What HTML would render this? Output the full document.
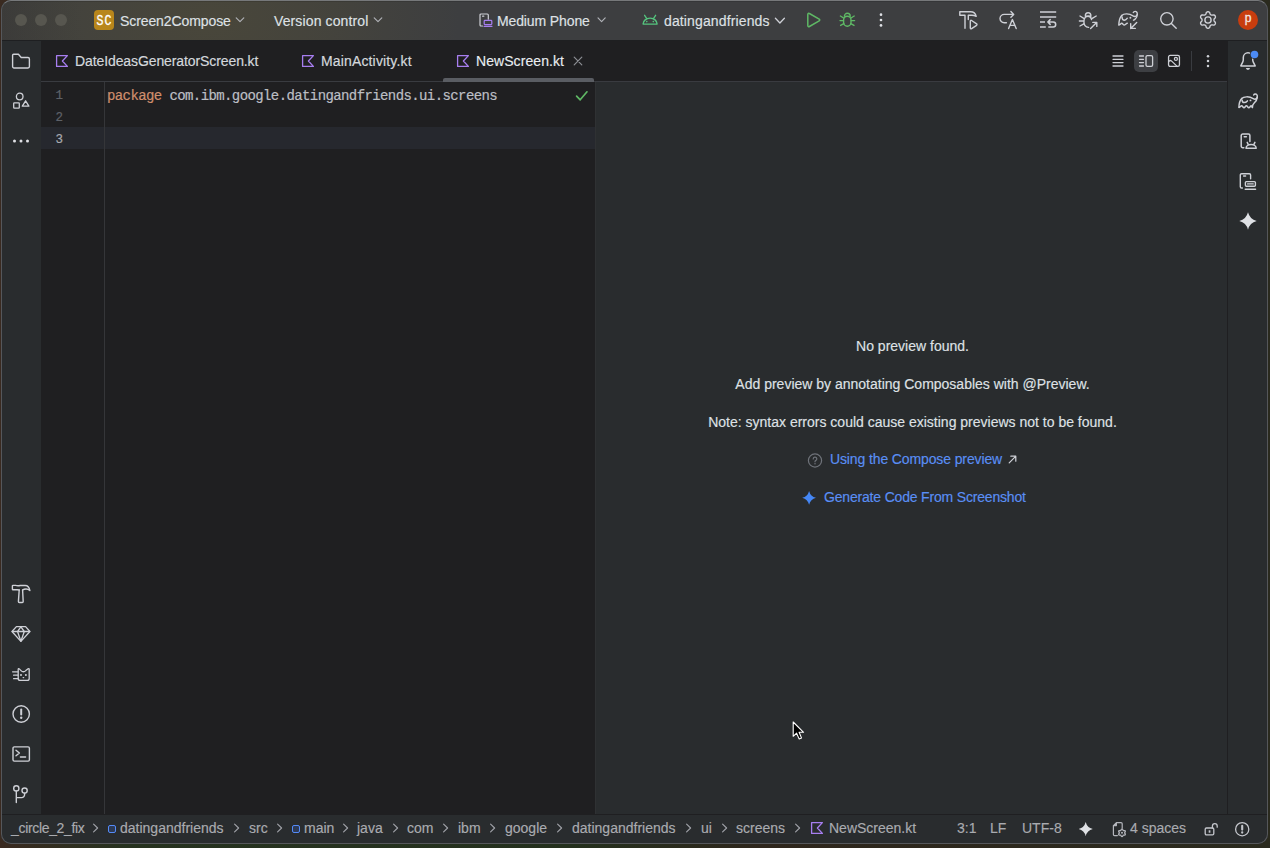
<!DOCTYPE html>
<html><head><meta charset="utf-8">
<style>
*{margin:0;padding:0;box-sizing:border-box}
html,body{width:1270px;height:848px;overflow:hidden;background:#1c2619;font-family:"Liberation Sans",sans-serif;position:relative}
#bg{position:absolute;left:0;top:0;width:1270px;height:848px;background:linear-gradient(180deg,rgba(0,0,0,0) 0,rgba(0,0,0,0) 840px,rgba(0,0,0,0) 100%),linear-gradient(90deg,#3a2a20 0,#26321f 10%,#24301d 45%,#2e261c 60%,#2a2a1e 100%)}
#win{position:absolute;left:0;top:0;width:1270px;height:848px;clip-path:inset(0px 2px 4px 1px round 10px);background:#292c2e}
#frame{position:absolute;left:1px;top:0px;width:1267px;height:844px;border-radius:10px;border:1px solid #55575b;border-top-color:#76787a;pointer-events:none}
.p{position:absolute}
#toolbar{position:absolute;left:0;top:0;width:1270px;height:41px;background:radial-gradient(ellipse 250px 150px at 210px 20px,rgba(100,90,45,0.3) 0,rgba(100,90,45,0.18) 50%,rgba(100,90,45,0) 100%),linear-gradient(90deg,#39393a 0,#3d3e40 80px,#3d3e40 100%);border-bottom:1px solid #1e1f21}
.t{position:absolute;white-space:nowrap;color:#dfe1e5;font-size:14px;line-height:16px;top:12.6px;-webkit-text-stroke:0.15px #dfe1e5}
svg{position:absolute;overflow:visible}
.ic{fill:none;stroke:#ced0d6;stroke-width:1.4;stroke-linecap:round;stroke-linejoin:round}
#lstripe{position:absolute;left:0;top:41px;width:41px;height:773px;background:#292c2e}
#rstripe{position:absolute;left:1227px;top:41px;width:43px;height:773px;background:#292c2e;border-left:1px solid #1f1f21}
#tabs{position:absolute;left:41px;top:41px;width:1186px;height:41px;background:#1f1f21;border-bottom:1px solid #393b40}
#editor{position:absolute;left:41px;top:82px;width:554px;height:732px;background:#1f1f21}
#preview{position:absolute;left:595px;top:82px;width:632px;height:732px;background:#292c2e;border-left:1px solid #2f3133}
#status{position:absolute;left:0;top:814px;width:1270px;height:34px;background:#292c2e;border-top:1px solid #1f1f21}
.mono{font-family:"Liberation Mono",monospace;font-size:14px;letter-spacing:-0.6px;line-height:16px;position:absolute;white-space:nowrap;-webkit-text-stroke:0.2px currentColor}
.st{position:absolute;white-space:nowrap;color:#a9abb0;font-size:14px;line-height:16px;top:820px;-webkit-text-stroke:0.15px #a9abb0}
.chev{fill:none;stroke:#a0a2a8;stroke-width:1.15;stroke-linecap:round;stroke-linejoin:round}
.pt{position:absolute;white-space:nowrap;color:#dfe1e5;font-size:14px;line-height:16px;text-align:center;left:596px;width:633px;-webkit-text-stroke:0.15px #dfe1e5}
</style></head><body>
<div id="bg"></div>
<div id="win">
  <div id="toolbar"></div>
  <div class="p" style="left:0;top:1px;width:1270px;height:1px;background:rgba(0,0,0,0.12)"></div>
  <div id="lstripe"></div>
  <div id="rstripe"></div>
  <div id="tabs"></div>
  <div id="editor"></div>
  <div id="preview"></div>
  <div id="status"></div>

  <div class="p" style="left:15px;top:14px;width:12px;height:12px;border-radius:6px;background:#57564f"></div>
  <div class="p" style="left:35px;top:14px;width:12px;height:12px;border-radius:6px;background:#57564f"></div>
  <div class="p" style="left:55px;top:14px;width:12px;height:12px;border-radius:6px;background:#57564f"></div>

  <div class="p" style="left:94px;top:10px;width:20px;height:20px;border-radius:4px;background:#b8861b"></div>
  <div class="p" style="left:89px;top:11px;width:30px;height:20px;color:#fff;font-size:14.5px;line-height:20px;text-align:center;font-family:'Liberation Mono',monospace;letter-spacing:1.2px;text-indent:1.2px;transform:scaleX(0.8);-webkit-text-stroke:0.3px #fff">SC</div>
  <div class="t" style="left:120px;letter-spacing:-0.09px">Screen2Compose</div>
  <svg style="left:235px;top:16px" width="10" height="8" viewBox="0 0 10 8"><path class="chev" style="stroke:#b0b2b7" d="M1.2 1.8 L5 5.6 L8.8 1.8"/></svg>
  <div class="t" style="left:274px;letter-spacing:0.12px">Version control</div>
  <svg style="left:373px;top:16px" width="10" height="8" viewBox="0 0 10 8"><path class="chev" style="stroke:#b0b2b7" d="M1.2 1.8 L5 5.6 L8.8 1.8"/></svg>

  <svg style="left:478px;top:12px" width="16" height="16" viewBox="0 0 16 16">
    <path class="ic" style="stroke-width:1.2" d="M4.5 14 H3 A1 1 0 0 1 2 13 V3 A1 1 0 0 1 3 2 H9.3 A1 1 0 0 1 10.3 3 V7.2"/>
    <path class="ic" style="stroke-width:1.2" d="M4.6 4.2 H5.8"/>
    <rect x="6.2" y="8.4" width="7.6" height="4.2" rx="0.8" fill="none" stroke="#a77ef0" stroke-width="1.2"/>
    <path d="M6 14.3 H14" stroke="#a77ef0" stroke-width="1.2" stroke-linecap="round"/>
  </svg>
  <div class="t" style="left:497px;letter-spacing:-0.12px">Medium Phone</div>
  <svg style="left:597px;top:16px" width="10" height="8" viewBox="0 0 10 8"><path class="chev" style="stroke:#b0b2b7" d="M1 1.8 L4.6 5.6 L8.2 1.8"/></svg>

  <svg style="left:640px;top:10px" width="20" height="20" viewBox="0 0 20 20">
    <path d="M3.1 14.1 A7 6 0 0 1 17.1 14.1 Z" fill="none" stroke="#55c47e" stroke-width="1.4" stroke-linejoin="round"/>
    <path d="M4.6 5.3 L6.6 8.3 M15.6 5.3 L13.6 8.3" stroke="#55c47e" stroke-width="1.3" stroke-linecap="round"/>
    <circle cx="6.8" cy="11.6" r="0.8" fill="#55c47e"/><circle cx="13.3" cy="11.6" r="0.8" fill="#55c47e"/>
  </svg>
  <div class="t" style="left:664px;letter-spacing:0.13px">datingandfriends</div>
  <svg style="left:774px;top:16px" width="12" height="9" viewBox="0 0 12 9"><path class="chev" style="stroke:#ced0d6;stroke-width:1.3" d="M1.4 2.2 L5.9 7 L10.4 2.2"/></svg>

  <svg style="left:803px;top:10px" width="20" height="20" viewBox="0 0 20 20">
    <path d="M4.8 4.4 C4.8 3.4 5.6 3 6.4 3.5 L16.2 9.2 C16.9 9.6 16.9 10.4 16.2 10.8 L6.4 16.5 C5.6 17 4.8 16.6 4.8 15.6 Z" fill="none" stroke="#5fb865" stroke-width="1.5" stroke-linejoin="round"/>
  </svg>
  <svg style="left:837px;top:10px" width="20" height="20" viewBox="0 0 20 20">
    <g fill="none" stroke="#5fb865" stroke-width="1.4" stroke-linecap="round" stroke-linejoin="round">
    <path d="M7.4 6.2 A2.9 2.9 0 0 1 13.2 6.2"/>
    <rect x="6.6" y="6.2" width="7.4" height="10" rx="3.7"/>
    <path d="M3 10.6 H6.4 M14.2 10.6 H17.6 M3.4 6 L6.6 8 M17.2 6 L14 8 M3.6 15.4 L6.8 13.6 M17 15.4 L13.8 13.6"/>
    </g>
  </svg>
  <svg style="left:871px;top:10px" width="20" height="20" viewBox="0 0 20 20"><g fill="#dfe1e5"><circle cx="10" cy="4.7" r="1.35"/><circle cx="10" cy="10" r="1.35"/><circle cx="10" cy="15.4" r="1.35"/></g></svg>

  <!-- right toolbar icons -->
  <svg style="left:958px;top:10px" width="20" height="20" viewBox="0 0 20 20"><g class="ic">
    <path d="M7 18.3 V5.3 H1.8 V1.7 H12.6 C15.4 1.7 17.6 3.6 18.2 6.3 C16.8 5.6 15.4 5.3 13.8 5.3 H10.3 V9.6"/>
    <path d="M12.3 11.2 C12.3 10.4 13 10.1 13.6 10.5 L18.6 13.9 C19.1 14.3 19.1 14.9 18.6 15.3 L13.6 18.7 C13 19.1 12.3 18.8 12.3 18 Z"/>
  </g></svg>
  <svg style="left:998px;top:10px" width="20" height="20" viewBox="0 0 20 20"><g class="ic">
    <path d="M8.4 12.8 H6.2 A4.2 4.2 0 0 1 6.2 4.4 H15.6 M12.9 1.6 L15.7 4.4 L12.9 7.2"/>
    <path d="M10.6 18.5 L14.4 9.6 L18.2 18.5 M11.9 15.4 H16.9"/>
  </g></svg>
  <svg style="left:1038px;top:10px" width="20" height="20" viewBox="0 0 20 20"><g class="ic" style="stroke-width:1.6;stroke-linecap:butt">
    <path d="M2 2 H18.2 M2 7 H18.2 M2 12 H7 M2 17 H7.8"/>
  </g><g class="ic" style="stroke-width:1.5">
    <path d="M10.8 17 H15.2 A2.5 2.5 0 0 0 15.2 12 H9.8 M12.2 9.6 L9.8 12 L12.2 14.4"/>
  </g></svg>
  <svg style="left:1078px;top:10px" width="20" height="20" viewBox="0 0 20 20"><g class="ic">
    <path d="M7.3 6.2 A2.8 3.4 0 0 1 12.9 6.2 Z"/>
    <path d="M13.6 9.6 C13.2 7.4 12 6.2 10.1 6.2 C7.6 6.2 5.9 8.3 5.9 11.6 C5.9 15.2 7.7 17.4 10.6 17.4"/>
    <path d="M1.4 11 H5.6 M2 6 L5.8 8.3 M2 16 L5.8 13.8 M18.2 6 L14.3 8.3"/>
    <path d="M12.6 18.6 L18.6 12.6 M14.8 12.4 H18.8 V16.4"/>
  </g></svg>
  <svg style="left:1118px;top:10px" width="20" height="20" viewBox="0 0 20 20"><g class="ic" style="stroke-width:1.4">
    <path d="M3.7 5.4 C5.5 3.6 11 3 15 5.9 C16.6 7 18.6 6.6 19.2 4.5 C19.6 2.6 18.4 1.4 17.2 1.4 C16.2 1.4 15.5 2 15.3 2.5"/>
    <path d="M19.2 4.5 C19.2 6.5 18.6 7.8 17.5 8.8 C16.8 9.5 16 9.9 15.5 10.2"/>
    <path d="M3.7 5.4 C2 7.2 1 10 0.8 15 C1.6 15.4 2.8 13.3 3.7 13.3 C4.8 13.3 5.2 15 6.2 15 C7.2 15 8.2 13.3 9.3 13.3"/>
    <path d="M3.9 6.6 C4 8.4 5 10.2 6.5 10.2 C7.6 10.2 8.6 9.2 9.3 8.2"/>
    <path d="M18.7 12.4 L12.7 18.4 M12.7 13.8 V18.4 H17.3"/>
  </g><circle cx="12.4" cy="7.8" r="0.95" fill="#ced0d6"/></svg>
  <svg style="left:1158px;top:10px" width="20" height="20" viewBox="0 0 20 20"><g class="ic" style="stroke-width:1.4">
    <circle cx="8.9" cy="8.8" r="6.2"/><path d="M13.4 13.4 L18.2 18.2"/>
  </g></svg>
  <svg style="left:1198px;top:10px" width="20" height="20" viewBox="0 0 20 20"><g class="ic" style="stroke-width:1.4">
    <path d="M15.95 10.00 L15.97 10.26 L16.02 10.53 L16.11 10.80 L16.24 11.10 L16.43 11.43 L16.86 11.84 L17.26 12.29 L17.38 12.69 L17.42 13.07 L17.39 13.45 L17.30 13.80 L17.14 14.12 L16.94 14.42 L16.68 14.68 L16.37 14.89 L16.02 15.05 L15.61 15.14 L15.02 15.02 L14.45 14.86 L14.08 14.86 L13.75 14.89 L13.47 14.95 L13.21 15.04 L12.97 15.15 L12.76 15.30 L12.55 15.48 L12.36 15.70 L12.17 15.96 L11.98 16.28 L11.84 16.86 L11.65 17.43 L11.36 17.74 L11.05 17.97 L10.71 18.12 L10.36 18.22 L10.00 18.25 L9.64 18.22 L9.29 18.12 L8.95 17.97 L8.64 17.74 L8.35 17.43 L8.16 16.86 L8.02 16.28 L7.83 15.96 L7.64 15.70 L7.45 15.48 L7.24 15.30 L7.03 15.15 L6.79 15.04 L6.53 14.95 L6.25 14.89 L5.92 14.86 L5.55 14.86 L4.98 15.02 L4.39 15.14 L3.98 15.05 L3.63 14.89 L3.32 14.68 L3.06 14.42 L2.86 14.13 L2.70 13.80 L2.61 13.45 L2.58 13.07 L2.62 12.69 L2.74 12.29 L3.14 11.84 L3.57 11.43 L3.76 11.10 L3.89 10.80 L3.98 10.53 L4.03 10.26 L4.05 10.00 L4.03 9.74 L3.98 9.47 L3.89 9.20 L3.76 8.90 L3.57 8.57 L3.14 8.16 L2.74 7.71 L2.62 7.31 L2.58 6.93 L2.61 6.55 L2.70 6.20 L2.86 5.87 L3.06 5.58 L3.32 5.32 L3.63 5.11 L3.98 4.95 L4.39 4.86 L4.98 4.98 L5.55 5.14 L5.92 5.14 L6.25 5.11 L6.53 5.05 L6.79 4.96 L7.02 4.85 L7.24 4.70 L7.45 4.52 L7.64 4.30 L7.83 4.04 L8.02 3.72 L8.16 3.14 L8.35 2.57 L8.64 2.26 L8.95 2.03 L9.29 1.88 L9.64 1.78 L10.00 1.75 L10.36 1.78 L10.71 1.88 L11.05 2.03 L11.36 2.26 L11.65 2.57 L11.84 3.14 L11.98 3.72 L12.17 4.04 L12.36 4.30 L12.55 4.52 L12.76 4.70 L12.97 4.85 L13.21 4.96 L13.47 5.05 L13.75 5.11 L14.08 5.14 L14.45 5.14 L15.02 4.98 L15.61 4.86 L16.02 4.95 L16.37 5.11 L16.68 5.32 L16.94 5.58 L17.14 5.88 L17.30 6.20 L17.39 6.55 L17.42 6.93 L17.38 7.31 L17.26 7.71 L16.86 8.16 L16.43 8.57 L16.24 8.90 L16.11 9.20 L16.02 9.47 L15.97 9.74Z"/><circle cx="10" cy="10" r="3.1"/>
  </g></svg>
  <div class="p" style="left:1238px;top:10px;width:20px;height:20px;border-radius:10px;background:#c83d0e"></div>
  <div class="p" style="left:1238px;top:10px;width:20px;height:20px;color:#f4e6e0;font-family:'Liberation Sans',sans-serif;font-size:12px;line-height:17px;text-align:center;-webkit-text-stroke:0.3px #f4e6e0">p</div>

  <!-- left stripe icons -->
  <svg style="left:11px;top:51px" width="20" height="20" viewBox="0 0 20 20"><g class="ic" style="stroke-width:1.4">
    <path d="M2.6 3.3 H7.4 L10.2 6.5 H17 A1.4 1.4 0 0 1 18.4 7.9 V15.6 A1.4 1.4 0 0 1 17 17 H3 A1.4 1.4 0 0 1 1.6 15.6 V4.3 A1 1 0 0 1 2.6 3.3 Z"/>
  </g></svg>
  <svg style="left:11px;top:91px" width="20" height="20" viewBox="0 0 20 20"><g class="ic" style="stroke-width:1.3">
    <circle cx="8.7" cy="5.5" r="3.3"/>
    <rect x="2.7" y="11.8" width="5.6" height="5.4" rx="0.6"/>
    <path d="M14.6 9.8 L17.9 15.2 H11.3 Z"/>
  </g></svg>
  <svg style="left:11px;top:131px" width="20" height="20" viewBox="0 0 20 20"><g fill="#dfe1e5">
    <circle cx="3.5" cy="10" r="1.5"/><circle cx="10" cy="10" r="1.5"/><circle cx="16.5" cy="10" r="1.5"/>
  </g></svg>

  <svg style="left:11px;top:584px" width="20" height="20" viewBox="0 0 20 20"><g class="ic" style="stroke-width:1.4">
    <path d="M8.2 6 C7 5.6 6 5.6 5 5.8 H2 A0.6 0.6 0 0 1 1.4 5.2 V2 A0.6 0.6 0 0 1 2 1.4 H4.6 C6 1.9 7.6 1.9 9.2 1.5 H14.2 C16.6 1.5 18.4 3.8 18.9 6.6 C17.8 5.6 16.4 5 15 5 C13.6 5 12.4 5.4 11.6 6"/>
    <path d="M8.2 6 L7.4 17.6 A0.9 0.9 0 0 0 8.3 18.5 H11.3 A0.9 0.9 0 0 0 12.2 17.6 L11.6 6"/>
  </g></svg>
  <svg style="left:11px;top:624px" width="20" height="20" viewBox="0 0 20 20"><g class="ic" style="stroke-width:1.3">
    <path d="M5.4 2.6 H14.6 L18.9 7.5 L9.9 17.4 L1 7.5 Z"/>
    <path d="M1.2 7.5 H18.7 M6.5 7.5 L9.9 2.8 L13.3 7.5 M6.5 7.5 L9.9 17.2 L13.3 7.5"/>
  </g></svg>
  <svg style="left:11px;top:664px" width="20" height="20" viewBox="0 0 20 20"><g class="ic" style="stroke-width:1.3">
    <path d="M7.2 14.4 V5.4 C7.2 4.7 7.8 4.4 8.3 4.9 L10 6.6 C11.4 8 13.4 8 14.8 6.6 L17.1 4.8 C17.6 4.4 18.2 4.6 18.2 5.3 V14.4 A2 2 0 0 1 16.2 16.4 H9.2 A2 2 0 0 1 7.2 14.4 Z"/>
    <path d="M1.6 7.8 H7 M2.6 11.2 H7 M2.6 14.7 H7"/>
  </g><g fill="#ced0d6"><circle cx="10" cy="10.9" r="1"/><circle cx="14.9" cy="10.9" r="1"/><path d="M11.3 13 H13.5 L12.4 14.4 Z"/></g></svg>
  <svg style="left:11px;top:704px" width="20" height="20" viewBox="0 0 20 20"><g class="ic" style="stroke-width:1.4">
    <circle cx="10.2" cy="10" r="8.2"/></g><path d="M10.2 5.6 V10.6" stroke="#ced0d6" stroke-width="2" stroke-linecap="round"/>
  <circle cx="10.2" cy="13.8" r="1.2" fill="#ced0d6"/></svg>
  <svg style="left:11px;top:744px" width="20" height="20" viewBox="0 0 20 20"><g class="ic" style="stroke-width:1.4">
    <rect x="2" y="2.9" width="16.4" height="14.2" rx="1.3"/>
    <path d="M5 6.2 L8.4 9 L5 11.8 M9.4 13 H14.6"/>
  </g></svg>
  <svg style="left:11px;top:784px" width="20" height="20" viewBox="0 0 20 20"><g class="ic" style="stroke-width:1.4">
    <circle cx="5.3" cy="4.4" r="2.6"/><circle cx="13.6" cy="6.6" r="2.6"/>
    <path d="M5.3 7 V18.6 M5.3 13.6 H10.6 A3 3 0 0 0 13.6 10.6 V9.2"/>
  </g></svg>

  <!-- right stripe icons -->
  <svg style="left:1238px;top:51px" width="20" height="20" viewBox="0 0 20 20"><g class="ic" style="stroke-width:1.5">
    <path d="M2.8 14.9 H17.2 L15.3 11.2 C14.9 10.4 14.7 9.6 14.7 8.6 V6.5 A4.7 4.7 0 0 0 5.3 6.5 V8.6 C5.3 9.6 5.1 10.4 4.7 11.2 Z"/>
  </g><path d="M7.9 17.1 H12 A2.05 1.8 0 0 1 7.9 17.1 Z" fill="#ced0d6"/>
  <circle cx="16.5" cy="3.45" r="4.6" fill="#2b2d30"/><circle cx="16.5" cy="3.45" r="3.8" fill="#4c8bf5"/></svg>
  <svg style="left:1238px;top:91px" width="20" height="20" viewBox="0 0 20 20"><g class="ic" style="stroke-width:1.5">
    <path d="M3.7 7.6 C5.5 5.6 11 5 15.2 7.6 C16.8 8.6 18.8 8.2 19.3 6 C19.6 4.2 18.6 3 17.4 3 C16.5 3 15.9 3.5 15.7 4"/>
    <path d="M19.3 6 C19.2 8.6 17.8 10.6 16 12.2 C15 13.2 14.4 14.4 14.4 16.4"/>
    <path d="M3.7 7.6 C2 9.4 1 12.4 0.9 16.4 C1.6 16.8 2.6 14.8 3.6 14.8 C4.6 14.8 5 16.8 6 16.8 C7 16.8 7.4 14.8 8.4 14.8 C9.4 14.8 9.8 16.8 10.8 16.8 C11.8 16.8 12.4 14.8 13.2 14.8 C13.8 14.8 14.1 16 14.4 16.4"/>
    <path d="M4 8.9 C4.2 10.6 5 11.6 6 11.6 C7.4 11.6 8.6 10.8 9.4 9.9"/>
  </g><circle cx="12.5" cy="9.4" r="0.95" fill="#ced0d6"/></svg>
  <svg style="left:1238px;top:131px" width="20" height="20" viewBox="0 0 20 20"><g class="ic" style="stroke-width:1.5">
    <path d="M5.8 16.7 H4.7 A1.5 1.5 0 0 1 3.2 15.2 V4.5 A1.5 1.5 0 0 1 4.7 3 H10.4 A1.5 1.5 0 0 1 11.9 4.5 V10.4"/>
    <path d="M6.2 5.8 H8.4"/>
    <path d="M8 17.2 A5.1 3.7 0 0 1 18.2 17.2 Z"/>
    <path d="M9.2 11.4 L10.2 13.4 M16.9 11.4 L15.9 13.4"/>
  </g></svg>
  <svg style="left:1238px;top:171px" width="20" height="20" viewBox="0 0 20 20"><g class="ic" style="stroke-width:1.4">
    <path d="M4.4 17 H3.6 A1.3 1.3 0 0 1 2.3 15.7 V4 A1.3 1.3 0 0 1 3.6 2.7 H11.3 A1.3 1.3 0 0 1 12.6 4 V7.8"/>
    <path d="M5.6 5 H7.6"/>
    <rect x="7.4" y="10.6" width="10" height="4.6" rx="1"/>
    <path d="M9.6 12.9 H15.2 M7.2 18.3 H17.6"/>
  </g></svg>
  <svg style="left:1238px;top:211px" width="20" height="20" viewBox="0 0 20 20">
    <path d="M10 1.3000000000000007 Q11.74 8.26 18.7 10 Q11.74 11.74 10 18.7 Q8.26 11.74 1.3000000000000007 10 Q8.26 8.26 10 1.3000000000000007 Z" fill="#dfe1e5"/>
  </svg>

  <!-- tabs -->
  <svg style="left:54px;top:53px" width="16" height="16" viewBox="0 0 16 16"><path d="M2.6 2.6 H13.4 L8.4 8 L13.4 13.4 H2.6 Z" fill="none" stroke="#a77ef0" stroke-width="1.3" stroke-linejoin="round"/></svg>
  <div class="t" style="left:75px;top:53px;color:#d4d6db;letter-spacing:-0.1px">DateIdeasGeneratorScreen.kt</div>
  <svg style="left:300px;top:53px" width="16" height="16" viewBox="0 0 16 16"><path d="M2.6 2.6 H13.4 L8.4 8 L13.4 13.4 H2.6 Z" fill="none" stroke="#a77ef0" stroke-width="1.3" stroke-linejoin="round"/></svg>
  <div class="t" style="left:321px;top:53px;color:#d4d6db;letter-spacing:0.15px">MainActivity.kt</div>
  <svg style="left:455px;top:53px" width="16" height="16" viewBox="0 0 16 16"><path d="M2.6 2.6 H13.4 L8.4 8 L13.4 13.4 H2.6 Z" fill="none" stroke="#a77ef0" stroke-width="1.3" stroke-linejoin="round"/></svg>
  <div class="t" style="left:476px;top:53px;color:#eceef2;letter-spacing:0.07px">NewScreen.kt</div>
  <svg style="left:572px;top:55px" width="12" height="12" viewBox="0 0 12 12"><path d="M2.2 2.2 L9.8 9.8 M9.8 2.2 L2.2 9.8" stroke="#8c8e94" stroke-width="1.2" stroke-linecap="round"/></svg>
  <div class="p" style="left:443px;top:78px;width:151px;height:4px;background:#5a5d63;border-radius:2px 2px 0 0"></div>

  <!-- tab bar right actions -->
  <svg style="left:1108px;top:51px" width="20" height="20" viewBox="0 0 20 20"><path d="M5 5 H15 M5 8.3 H15 M5 11.6 H15 M5 15 H15" stroke="#ced0d6" stroke-width="1.3" stroke-linecap="round"/></svg>
  <div class="p" style="left:1134px;top:50px;width:24px;height:22px;border-radius:5px;background:#3d3f43"></div>
  <svg style="left:1136px;top:51px" width="20" height="20" viewBox="0 0 20 20"><g class="ic" style="stroke-width:1.3">
    <path d="M3.5 5 H7.5 M3.5 8.3 H7.5 M3.5 11.6 H7.5 M3.5 15 H7.5"/><rect x="10" y="4.6" width="6.6" height="10.8" rx="1.4"/>
  </g></svg>
  <svg style="left:1164px;top:51px" width="20" height="20" viewBox="0 0 20 20"><g class="ic" style="stroke-width:1.3">
    <rect x="4.55" y="4.45" width="10.9" height="11" rx="1.6"/><path d="M4.6 10.9 C5.4 9.5 6.4 9.1 7.4 9.9 L13.2 15.4"/><circle cx="11.9" cy="7.9" r="1.5"/>
  </g></svg>
  <div class="p" style="left:1191px;top:51px;width:1px;height:20px;background:#393b40"></div>
  <svg style="left:1198px;top:51px" width="20" height="20" viewBox="0 0 20 20"><g fill="#ced0d6"><circle cx="10" cy="5.2" r="1.25"/><circle cx="10" cy="10" r="1.25"/><circle cx="10" cy="15" r="1.25"/></g></svg>

  <!-- editor -->
  <div class="p" style="left:41px;top:127px;width:554px;height:22px;background:#26282e"></div>
  <div class="p" style="left:104px;top:82px;width:1px;height:732px;background:#353639"></div>
  <div class="mono" style="left:55.5px;top:87.5px;color:#5e6168;font-size:12.5px;letter-spacing:0">1</div>
  <div class="mono" style="left:55.5px;top:109.5px;color:#5e6168;font-size:12.5px;letter-spacing:0">2</div>
  <div class="mono" style="left:55.5px;top:131.5px;color:#a9abb1;font-size:12.5px;letter-spacing:0">3</div>
  <div class="mono" style="left:107px;top:88px;color:#bcbec4"><span style="color:#cf8e6d">package</span> com.ibm.google.datingandfriends.ui.screens</div>
  <svg style="left:574px;top:88px" width="14" height="14" viewBox="0 0 14 14"><path d="M2.6 8.2 L6.2 11.8 L13 3.8" fill="none" stroke="#5fb865" stroke-width="1.7" stroke-linecap="round" stroke-linejoin="round"/></svg>

  <!-- preview -->
  <div class="pt" style="top:338px">No preview found.</div>
  <div class="pt" style="top:376px">Add preview by annotating Composables with @Preview.</div>
  <div class="pt" style="top:414px">Note: syntax errors could cause existing previews not to be found.</div>
  <svg style="left:807px;top:452px" width="16" height="16" viewBox="0 0 16 16"><circle cx="8" cy="8.5" r="6.6" fill="none" stroke="#6f737a" stroke-width="1.2"/><path d="M6.2 6.9 A1.8 1.8 0 1 1 8.6 8.6 C8.1 8.9 8 9.2 8 9.8" fill="none" stroke="#6f737a" stroke-width="1.2" stroke-linecap="round"/><circle cx="8" cy="11.7" r="0.75" fill="#6f737a"/></svg>
  <div class="t" style="left:830px;top:451px;color:#5a8ff5;letter-spacing:-0.12px;-webkit-text-stroke:0.15px #5a8ff5">Using the Compose preview</div>
  <svg style="left:1007px;top:454px" width="10" height="10" viewBox="0 0 10 10"><path d="M2.2 8.8 L8.6 2.4 M3.8 2.2 H8.8 V7.2" fill="none" stroke="#ced0d6" stroke-width="1.2" stroke-linecap="round" stroke-linejoin="round"/></svg>
  <svg style="left:801px;top:490px" width="16" height="16" viewBox="0 0 16 16"><path d="M8.1 0.8999999999999995 Q9.48 6.42 15.0 7.8 Q9.48 9.18 8.1 14.7 Q6.72 9.18 1.1999999999999993 7.8 Q6.72 6.42 8.1 0.8999999999999995 Z" fill="#4587f5"/></svg>
  <div class="t" style="left:824px;top:489px;color:#5a8ff5;letter-spacing:-0.18px;-webkit-text-stroke:0.15px #5a8ff5">Generate Code From Screenshot</div>

  <!-- cursor -->
  <svg style="left:792px;top:721px" width="14" height="20" viewBox="0 0 14 20"><path d="M1.2 1 V15.3 L4.6 12.2 L7.1 17.9 L9.5 16.9 L7.1 11.3 H11.6 Z" fill="#000" stroke="#fff" stroke-width="1.1" stroke-linejoin="round"/></svg>

  <!-- status bar -->
  <div class="st" style="left:11px;letter-spacing:-0.33px">_circle_2_fix</div>
  <svg style="left:90.0px;top:820px" width="10" height="14" viewBox="0 0 10 14"><path class="chev" d="M3.6 4.2 L7.6 8 L3.6 11.8"/></svg>
  <div class="p" style="left:108px;top:825px;width:8px;height:8px;border:1.4px solid #548af7;border-radius:2px;background:#2d3a55"></div>
  <div class="st" style="left:120px">datingandfriends</div>
  <svg style="left:231.0px;top:820px" width="10" height="14" viewBox="0 0 10 14"><path class="chev" d="M3.6 4.2 L7.6 8 L3.6 11.8"/></svg>
  <div class="st" style="left:249px">src</div>
  <svg style="left:274.0px;top:820px" width="10" height="14" viewBox="0 0 10 14"><path class="chev" d="M3.6 4.2 L7.6 8 L3.6 11.8"/></svg>
  <div class="p" style="left:292px;top:825px;width:8px;height:8px;border:1.4px solid #548af7;border-radius:2px;background:#2d3a55"></div>
  <div class="st" style="left:304px">main</div>
  <svg style="left:340.4px;top:820px" width="10" height="14" viewBox="0 0 10 14"><path class="chev" d="M3.6 4.2 L7.6 8 L3.6 11.8"/></svg>
  <div class="st" style="left:357px">java</div>
  <svg style="left:389.5px;top:820px" width="10" height="14" viewBox="0 0 10 14"><path class="chev" d="M3.6 4.2 L7.6 8 L3.6 11.8"/></svg>
  <div class="st" style="left:407px">com</div>
  <svg style="left:440.3px;top:820px" width="10" height="14" viewBox="0 0 10 14"><path class="chev" d="M3.6 4.2 L7.6 8 L3.6 11.8"/></svg>
  <div class="st" style="left:458px">ibm</div>
  <svg style="left:487.4px;top:820px" width="10" height="14" viewBox="0 0 10 14"><path class="chev" d="M3.6 4.2 L7.6 8 L3.6 11.8"/></svg>
  <div class="st" style="left:505px">google</div>
  <svg style="left:554.2px;top:820px" width="10" height="14" viewBox="0 0 10 14"><path class="chev" d="M3.6 4.2 L7.6 8 L3.6 11.8"/></svg>
  <div class="st" style="left:572px">datingandfriends</div>
  <svg style="left:683.1px;top:820px" width="10" height="14" viewBox="0 0 10 14"><path class="chev" d="M3.6 4.2 L7.6 8 L3.6 11.8"/></svg>
  <div class="st" style="left:701px">ui</div>
  <svg style="left:718.5px;top:820px" width="10" height="14" viewBox="0 0 10 14"><path class="chev" d="M3.6 4.2 L7.6 8 L3.6 11.8"/></svg>
  <div class="st" style="left:736px">screens</div>
  <svg style="left:791.6px;top:820px" width="10" height="14" viewBox="0 0 10 14"><path class="chev" d="M3.6 4.2 L7.6 8 L3.6 11.8"/></svg>
  <svg style="left:809px;top:820px" width="16" height="16" viewBox="0 0 16 16"><path d="M2.6 2.6 H13.4 L8.4 8 L13.4 13.4 H2.6 Z" fill="none" stroke="#a77ef0" stroke-width="1.3" stroke-linejoin="round"/></svg>
  <div class="st" style="left:829px">NewScreen.kt</div>
  <div class="st" style="left:957px">3:1</div>
  <div class="st" style="left:990px">LF</div>
  <div class="st" style="left:1022px">UTF-8</div>
  <svg style="left:1077px;top:821px" width="16" height="16" viewBox="0 0 16 16"><path d="M8.7 1.0 Q10.12 6.68 15.799999999999999 8.1 Q10.12 9.52 8.7 15.2 Q7.279999999999999 9.52 1.5999999999999996 8.1 Q7.279999999999999 6.68 8.7 1.0 Z" fill="#dfe1e5"/></svg>
  <svg style="left:1111px;top:821px" width="16" height="16" viewBox="0 0 16 16"><g class="ic" style="stroke-width:1.2;stroke:#b4b6bc"><path d="M6.4 14.6 H3.6 A1.2 1.2 0 0 1 2.4 13.4 V4.6 L5.4 1.6 H10 A1.2 1.2 0 0 1 11.2 2.8 V7.2 M2.6 4.6 H5.4 V1.8"/><path style="stroke-width:1.3" d="M13.65 11.80 L13.71 12.04 L13.88 12.31 L14.09 12.63 L14.27 12.99 L14.33 13.35 L14.25 13.68 L14.01 13.91 L13.66 14.03 L13.26 14.06 L12.88 14.04 L12.56 14.03 L12.33 14.09 L12.15 14.27 L12.00 14.55 L11.83 14.89 L11.60 15.22 L11.32 15.46 L11.00 15.55 L10.68 15.46 L10.40 15.22 L10.17 14.89 L10.00 14.55 L9.85 14.27 L9.68 14.09 L9.44 14.03 L9.12 14.04 L8.74 14.06 L8.34 14.03 L7.99 13.91 L7.75 13.68 L7.67 13.35 L7.73 12.99 L7.91 12.63 L8.12 12.31 L8.29 12.04 L8.35 11.80 L8.29 11.56 L8.12 11.29 L7.91 10.97 L7.73 10.61 L7.67 10.25 L7.75 9.93 L7.99 9.69 L8.34 9.57 L8.74 9.54 L9.12 9.56 L9.44 9.57 L9.67 9.51 L9.85 9.33 L10.00 9.05 L10.17 8.71 L10.40 8.38 L10.68 8.14 L11.00 8.05 L11.32 8.14 L11.60 8.38 L11.83 8.71 L12.00 9.05 L12.15 9.33 L12.32 9.51 L12.56 9.57 L12.88 9.56 L13.26 9.54 L13.66 9.57 L14.01 9.69 L14.25 9.93 L14.33 10.25 L14.27 10.61 L14.09 10.97 L13.88 11.29 L13.71 11.56Z"/></g><circle cx="11" cy="11.8" r="1" fill="#b4b6bc"/></svg>
  <div class="st" style="left:1130px">4 spaces</div>
  <svg style="left:1203px;top:821px" width="16" height="16" viewBox="0 0 16 16"><g class="ic" style="stroke-width:1.3;stroke:#c4c6cc"><rect x="2.2" y="7" width="8.6" height="6.8" rx="1.2"/><path d="M9.4 7 V5 A2.4 2.4 0 0 1 14.2 5 V6.2"/></g><rect x="5.7" y="9.3" width="1.7" height="2.4" fill="#c4c6cc"/></svg>
  <svg style="left:1234px;top:821px" width="16" height="16" viewBox="0 0 16 16"><g class="ic" style="stroke-width:1.3;stroke:#c4c6cc"><circle cx="8.2" cy="8.2" r="6.6"/></g><path d="M8.2 4.8 V8.6" stroke="#c4c6cc" stroke-width="2.1" stroke-linecap="round"/><circle cx="8.2" cy="11.5" r="1.15" fill="#c4c6cc"/></svg>
</div>
<div id="frame"></div>
</body></html>
